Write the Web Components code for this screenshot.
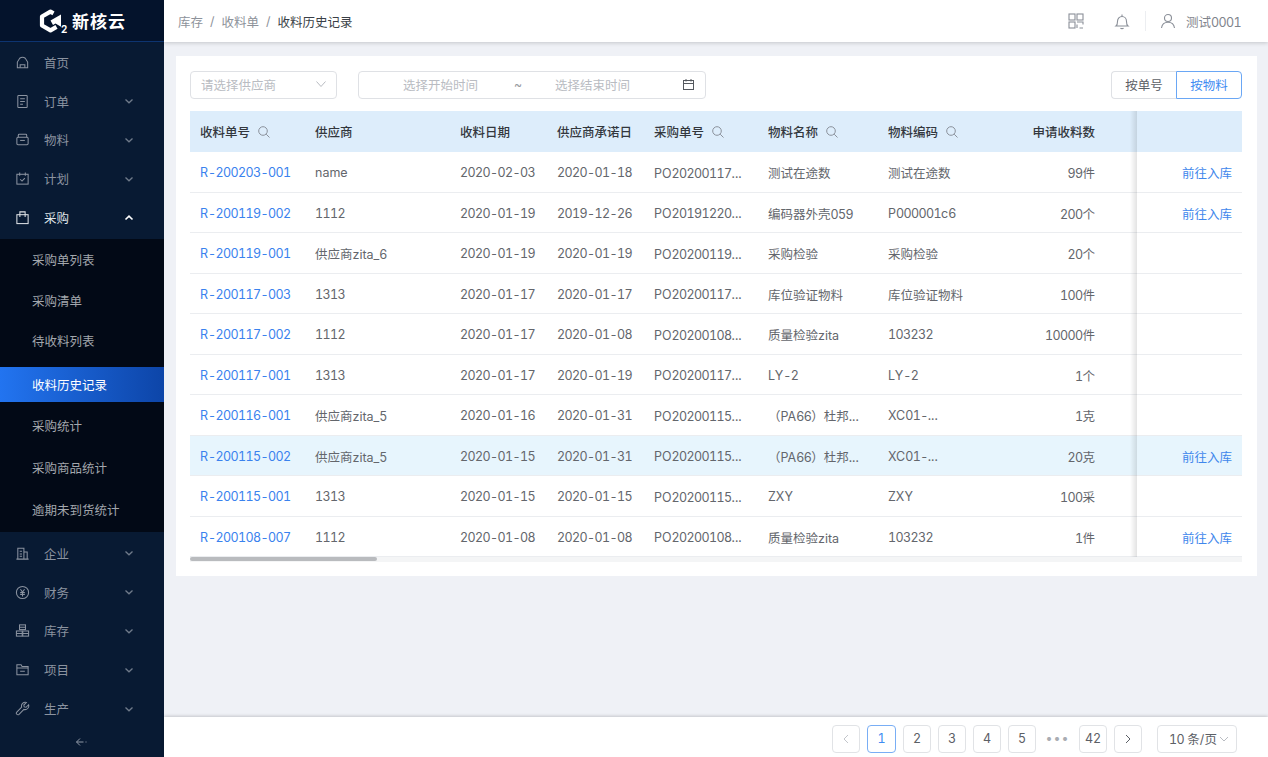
<!DOCTYPE html>
<html lang="zh-CN">
<head>
<meta charset="utf-8">
<title>收料历史记录</title>
<style>
  html, body { margin: 0; height: 100%; }
  body { font-family: Inter, "Noto Sans CJK SC", sans-serif; font-size: 12.5px; font-variant-numeric: tabular-nums; overflow: hidden; }
</style>
</head>
<body>
<app-shell>
  <side-nav slot="side"></side-nav>
  <top-bar slot="top"></top-bar>
  <receipt-table></receipt-table>
  <page-bar slot="bottom"></page-bar>
</app-shell>

<script>
const ICONS = {
  home: '<path d="M2.5 13.5V7.5L5 3.5c1.500-1 4.500-1 6 0l2.500 4v6z"/><path d="M5.500 13.500v-3h5v3"/>',
  order: '<rect x="3" y="1.500" width="10" height="13" rx=".8"/><path d="M5.500 5h5M5.500 8h5M5.500 11h3"/>',
  box: '<path d="M3.500 5.500V3.500c0-.6.4-1 1-1h7c.6 0 1 .4 1 1v2"/><rect x="2" y="5.500" width="12" height="8" rx="1.200"/><path d="M5.500 9h5"/>',
  plan: '<rect x="2" y="3.500" width="12" height="10.500"/><path d="M5 1.500v3.500M11 1.500v3.500M5.500 8.800 7.500 10.800 10.500 7.500"/>',
  bag: '<rect x="2" y="5" width="12" height="9.500"/><path d="M5.200 7.500V2h5.600v5.500"/>',
  corp: '<path d="M3 14V2.500h6.500V14M1.500 14h13M9.500 6.500H13V14M5 5.500h2.500M5 8.500h2.500M5 11h2.500"/>',
  money: '<circle cx="8" cy="8" r="6.500"/><path d="M5.800 4.600 8 7.500l2.200-2.900M5.500 8h5M5.500 10h5M8 7.500V12.200"/>',
  stock: '<rect x="4.800" y="2" width="6.400" height="5"/><rect x="1.500" y="8.500" width="6.200" height="5.500"/><rect x="8.300" y="8.500" width="6.200" height="5.500"/><path d="M1.500 11.200h6.200M8.300 11.200h6.200M4.800 4.500h6.400"/>',
  folder: '<path d="M2 3h4.500l1 1.800H14V13.500H2z"/><path d="M2 6.500h12M5.500 9.800h5"/>',
  wrench: '<path d="M14.500 4 11.800 6.700 9.800 6.300 9.400 4.300 12.100 1.600a4 4 0 0 0-5 5L1.900 11.800a1.700 1.700 0 0 0 2.400 2.400l5.200-5.200a4 4 0 0 0 5-5z"/>'
};

const CHEVRON_DOWN = '<svg width="10" height="10" viewBox="0 0 10 10" fill="none" stroke="currentColor" stroke-width="1.300"><path d="M1.500 3.500 5 6.800 8.500 3.500"/></svg>';
const CHEVRON_UP = '<svg width="10" height="10" viewBox="0 0 10 10" fill="none" stroke="currentColor" stroke-width="1.600"><path d="M1.500 6.500 5 3.200 8.500 6.500"/></svg>';
const SEARCH = '<svg width="14" height="14" viewBox="0 0 14 14" fill="none" stroke="#8b929c" stroke-width="1"><circle cx="6" cy="6" r="4.300"/><path d="M9.200 9.200 12.500 12.500"/></svg>';

// digits are tabular but a bit too wide at this size, so runs of them get tightened
const tight = text => text.replace(/[\d-]+/g, '<span class="n">$&</span>');

class NavItem extends HTMLElement {
  constructor() {
    super();
    this.attachShadow({mode: 'open'});
  }
  connectedCallback() {
    const icon = ICONS[this.getAttribute('icon')];
    const open = this.hasAttribute('open');
    const arrow = this.hasAttribute('leaf') ? '' : (open ? CHEVRON_UP : CHEVRON_DOWN);
    this.shadowRoot.innerHTML = `<style>
        :host { display: flex; align-items: center; height: 38.8px; padding: 0 30px 0 15px; color: #8b93a0; font-size: 12.5px; }
        :host([open]) { color: #dfe2e6; }
        svg.ico { width: 15px; height: 15px; margin-right: 14px; flex: none; }
        span { flex: 1; }
        .arrow { display: flex; color: #6f7a8a; }
        :host([open]) .arrow { color: #fff; }
      </style>
      <svg class="ico" viewBox="0 0 16 16" fill="none" stroke="currentColor" stroke-width="1.100">${icon}</svg>
      <span><slot></slot></span>
      <div class="arrow">${arrow}</div>`;
  }
}
customElements.define('nav-item', NavItem);

class SubItem extends HTMLElement {
  constructor() {
    super();
    this.attachShadow({mode: 'open'}).innerHTML = `<style>
        :host { display: flex; align-items: center; height: 42px; padding-left: 32px; color: #a3a7ad; font-size: 12.5px; }
        :host([active]) { color: #fff; background: linear-gradient(90deg, #2274f0, #0d45a8); height: 35px; margin: 6px 0 3px; }
      </style><slot></slot>`;
  }
}
customElements.define('sub-item', SubItem);

class SideNav extends HTMLElement {
  constructor() {
    super();
    this.attachShadow({mode: 'open'}).innerHTML = `<style>
        :host { display: flex; flex-direction: column; width: 164px; height: 757px; background: #081a33; }
        .logo { height: 41px; flex: none; background: #04132c; border-bottom: 1px solid #0d3470; display: flex; align-items: center; padding-left: 39px; color: #fff; }
        .mark { position: relative; width: 33px; height: 24px; flex: none; }
        .mark svg { display: block; }
        .mark span { position: absolute; left: 22px; top: 14px; font: 700 10px/12px Inter, sans-serif; }
        .logo b { font: 700 17px "Noto Sans CJK SC", sans-serif; letter-spacing: 1px; }
        .top { padding: 1px 0 2.5px; }
        .sub { background: #020916; height: 292.5px; }
        .sub sub-item:nth-child(-n+3) { height: 40.5px; }
        .low { padding-top: 2px; }
        .foot { flex: 1; display: flex; justify-content: center; align-items: center; color: #8f98a6; }
      </style>
      <div class="logo">
        <div class="mark">
          <svg width="24" height="24" viewBox="0 0 24 24" fill="none" stroke="#fff" stroke-width="4.200" stroke-linejoin="round"><path d="M14.500 4.300 11.500 2.600 3 7.500v9l8.500 4.900 6-3.500"/><path fill="#fff" stroke="none" d="M11.500 11.500 22 5.500v12.300l-5.500-3.200-2.500 1.400z"/></svg>
          <span>2</span>
        </div>
        <b>新核云</b>
      </div>
      <div class="top">
        <nav-item icon="home" leaf>首页</nav-item>
        <nav-item icon="order">订单</nav-item>
        <nav-item icon="box">物料</nav-item>
        <nav-item icon="plan">计划</nav-item>
        <nav-item icon="bag" open>采购</nav-item>
      </div>
      <div class="sub">
        <sub-item>采购单列表</sub-item>
        <sub-item>采购清单</sub-item>
        <sub-item>待收料列表</sub-item>
        <sub-item active>收料历史记录</sub-item>
        <sub-item>采购统计</sub-item>
        <sub-item>采购商品统计</sub-item>
        <sub-item>逾期未到货统计</sub-item>
      </div>
      <div class="low">
        <nav-item icon="corp">企业</nav-item>
        <nav-item icon="money">财务</nav-item>
        <nav-item icon="stock">库存</nav-item>
        <nav-item icon="folder">项目</nav-item>
        <nav-item icon="wrench">生产</nav-item>
      </div>
      <div class="foot"><svg width="14" height="10" viewBox="0 0 14 10" fill="none" stroke="currentColor" stroke-width="1"><path d="M5 1.500 1.500 5 5 8.500M1.500 5h7M10.500 5h1"/></svg></div>`;
  }
}
customElements.define('side-nav', SideNav);

class TopBar extends HTMLElement {
  constructor() {
    super();
    this.attachShadow({mode: 'open'}).innerHTML = `<style>
        :host { display: flex; align-items: center; height: 42px; background: #fff; box-shadow: 0 1px 4px rgba(0,0,0,.18); padding: 0 27px 0 14px; color: #8d929a; font-size: 12.5px; position: relative; z-index: 2; }
        .crumbs { flex: 1; display: flex; gap: 7px; }
        .cur { color: #3a3f47; }
        .s { padding-top: 2px; }
        svg { display: block; }
        .right { display: flex; align-items: center; color: #8a8f98; }
        .sep { width: 1px; height: 20px; background: #eceef1; margin: 0 14px 0 15px; }
        .user { margin-left: 10px; color: #7f848c; }
        .n { letter-spacing: -.6px; }
      </style>
      <div class="crumbs"><span>库存</span><span class="s">/</span><span>收料单</span><span class="s">/</span><span class="cur">收料历史记录</span></div>
      <div class="right">
        <svg width="16" height="16" viewBox="0 0 16 16" fill="none" stroke="currentColor" stroke-width="1.100" style="margin-right:30px"><rect x="1" y="1" width="6" height="6"/><rect x="9" y="1" width="6" height="6"/><rect x="1" y="9" width="6" height="6"/><path d="M9 9h6v2.500M9 11.500V15M11.500 15H15"/></svg>
        <svg width="16" height="17" viewBox="0 0 16 17" fill="none" stroke="currentColor" stroke-width="1.100"><path d="M2 13c1.300-1 1.500-2 1.500-4.500C3.500 5.500 5.500 3.500 8 3.500s4.500 2 4.500 5c0 2.500.2 3.500 1.500 4.500z"/><path d="M8 1.500v2M6.500 15c.5.800 2.500.8 3 0"/></svg>
        <div class="sep"></div>
        <svg width="16" height="16" viewBox="0 0 16 16" fill="none" stroke="currentColor" stroke-width="1.100"><circle cx="8" cy="5" r="3.500"/><path d="M1.500 15c.5-3.500 3-5.800 6.500-5.800s6 2.300 6.500 5.800"/></svg>
        <span class="user">测试<span class="n">0001</span></span>
      </div>`;
  }
}
customElements.define('top-bar', TopBar);

const ROWS = [
  ['R-200203-001','name','2020-02-03','2020-01-18','PO20200117...','测试在途数','测试在途数','99件',1],
  ['R-200119-002','1112','2020-01-19','2019-12-26','PO20191220...','编码器外壳059','P000001c6','200个',1],
  ['R-200119-001','供应商zita_6','2020-01-19','2020-01-19','PO20200119...','采购检验','采购检验','20个',0],
  ['R-200117-003','1313','2020-01-17','2020-01-17','PO20200117...','库位验证物料','库位验证物料','100件',0],
  ['R-200117-002','1112','2020-01-17','2020-01-08','PO20200108...','质量检验zita','103232','10000件',0],
  ['R-200117-001','1313','2020-01-17','2020-01-19','PO20200117...','LY-2','LY-2','1个',0],
  ['R-200116-001','供应商zita_5','2020-01-16','2020-01-31','PO20200115...','（PA66）杜邦...','XC01-...','1克',0],
  ['R-200115-002','供应商zita_5','2020-01-15','2020-01-31','PO20200115...','（PA66）杜邦...','XC01-...','20克',1,1],
  ['R-200115-001','1313','2020-01-15','2020-01-15','PO20200115...','ZXY','ZXY','100采',0],
  ['R-200108-007','1112','2020-01-08','2020-01-08','PO20200108...','质量检验zita','103232','1件',1]
];

class ReceiptTable extends HTMLElement {
  constructor() {
    super();
    const head = ['收料单号','供应商','收料日期','供应商承诺日','采购单号','物料名称','物料编码','申请收料数'];
    const searchable = [0, 4, 5, 6];
    const headHtml = head.map((h, i) => `<div class="th ${i === 7 ? 'num' : ''}">${h}${searchable.includes(i) ? SEARCH : ''}</div>`).join('') + '<div class="th fix"></div>';
    const rowHtml = ROWS.map(r => {
      const cells = r.slice(0, 8).map((c, i) => `<div class="td ${i === 0 ? 'link' : ''} ${i === 4 ? 'po' : ''} ${i === 7 ? 'num' : ''}"><div>${tight(c)}</div></div>`).join('');
      return `<div class="row ${r[9] ? 'on' : ''}">${cells}<div class="td fix go">${r[8] ? '前往入库' : ''}</div></div>`;
    }).join('');
    this.attachShadow({mode: 'open'}).innerHTML = `<style>
        :host { display: block; background: #fff; padding: 15px 15px 14px 14px; margin: 14px 11px 0 12px; color: #63666c; font-size: 12.5px; }
        .bar { display: flex; align-items: center; height: 28px; gap: 21px; margin-bottom: 12px; }
        .box { box-sizing: border-box; height: 28px; border: 1px solid #dfe1e5; border-radius: 4px; display: flex; align-items: center; color: #b9bcc2; }
        .sel { width: 147px; padding: 0 9px 2px 10px; justify-content: space-between; }
        .range { width: 348px; padding: 0 10px 2px 44px; }
        .range span:nth-child(1) { width: 111px; flex: none; }
        .range span:nth-child(2) { width: 41px; flex: none; color: #9a9da3; }
        .range span:nth-child(3) { flex: 1; }
        .range svg { color: #55595f; }
        .toggle { margin-left: auto; display: flex; }
        .toggle div { box-sizing: border-box; height: 28px; width: 65px; padding-bottom: 2px; display: flex; align-items: center; justify-content: center; border: 1px solid #dfe1e5; border-right: 0; border-radius: 4px 0 0 4px; color: #5c6066; }
        .toggle div.on { width: 66px; border: 1px solid #6aa7f5; border-radius: 0 4px 4px 0; color: #3f8cf2; }
        .grid { position: relative; }
        .shade { position: absolute; top: 0; bottom: 0; right: 105px; width: 7px; background: linear-gradient(90deg, rgba(0,0,0,0), rgba(0,0,0,.11)); }
        .row, .head { display: grid; grid-template-columns: 115px 145px 97px 97px 114px 120px 100px 127px 32px 105px; }
        .head { height: 41px; background: #ddedfb; color: #33373d; font-weight: 500; }
        .row { height: 40.5px; box-sizing: border-box; border-bottom: 1px solid #ebedf0; }
        .row.on { background: #e7f5fd; }
        .th, .td { display: flex; align-items: center; padding: 0 10px; white-space: nowrap; }
        .td { padding-top: 2px; }
        .th svg { margin-left: 7px; }
        .num { justify-content: flex-end; }
        .n { letter-spacing: -.6px; }
        .td.po { padding-top: 3px; }
        .link { color: #3a82ee; }
        .fix { grid-column: 10; justify-content: flex-end; }
        .go { color: #3f87ec; }
        .bar2 { height: 5px; background: #f4f5f6; }
        .bar2 i { display: block; width: 187px; height: 4px; border-radius: 2px; background: #b9bbbe; }
      </style>
      <div class="bar">
        <div class="box sel"><span>请选择供应商</span><svg width="12" height="12" viewBox="0 0 12 12" fill="none" stroke="#b9bcc2" stroke-width="1"><path d="M1.500 3.500 6 8.500l4.500-5"/></svg></div>
        <div class="box range"><span>选择开始时间</span><span>~</span><span>选择结束时间</span><svg width="13" height="13" viewBox="0 0 13 13" fill="none" stroke="currentColor" stroke-width="1"><rect x="1.500" y="2.500" width="10" height="9"/><path d="M1.500 5.500h10M4 1v2.500M9 1v2.500"/></svg></div>
        <div class="toggle"><div>按单号</div><div class="on">按物料</div></div>
      </div>
      <div class="grid">
        <div class="head">${headHtml}</div>
        ${rowHtml}
        <div class="shade"></div>
      </div>
      <div class="bar2"><i></i></div>`;
  }
}
customElements.define('receipt-table', ReceiptTable);

class PageBar extends HTMLElement {
  constructor() {
    super();
    const pages = ['1','2','3','4','5'];
    this.attachShadow({mode: 'open'}).innerHTML = `<style>
        :host { display: flex; align-items: center; justify-content: flex-end; gap: 7px; height: 40px; box-sizing: border-box; padding: 3px 31px 0 0; background: #fff; box-shadow: 0 -1px 3px rgba(0,0,0,.18); color: #5c6066; font-size: 12.5px; position: relative; }
        .p { box-sizing: border-box; width: 28px; height: 28px; border: 1px solid #e1e3e6; border-radius: 4px; display: flex; align-items: center; justify-content: center; }
        .p.on { width: 29px; border-color: #79aef5; color: #3f8cf2; }
        .p.off { color: #c3c6cb; }
        .dots { width: 29px; text-align: center; color: #a9acb2; letter-spacing: 1px; }
        .size { box-sizing: border-box; width: 80px; height: 28px; margin-left: 8px; border: 1px solid #e1e3e6; border-radius: 4px; display: flex; align-items: center; padding-left: 11px; gap: 2px; }
        .n { letter-spacing: -.6px; }
      </style>
      <div class="p off"><svg width="10" height="10" viewBox="0 0 10 10" fill="none" stroke="currentColor"><path d="M7 1 3 5l4 4"/></svg></div>
      ${pages.map((p, i) => `<div class="p ${i === 0 ? 'on' : ''}">${p}</div>`).join('')}
      <div class="dots">•••</div>
      <div class="p">42</div>
      <div class="p"><svg width="10" height="10" viewBox="0 0 10 10" fill="none" stroke="currentColor"><path d="M3 1l4 4-4 4"/></svg></div>
      <div class="size"><span><span class="n">10</span> 条/页</span><svg width="10" height="10" viewBox="0 0 10 10" fill="none" stroke="#b9bcc2"><path d="M1 3l4 4 4-4"/></svg></div>`;
  }
}
customElements.define('page-bar', PageBar);

class AppShell extends HTMLElement {
  constructor() {
    super();
    this.attachShadow({mode: 'open'}).innerHTML = `<style>
        :host { display: flex; width: 1268px; height: 757px; background: #eff1f6; overflow: hidden; }
        .main { flex: 1; min-width: 0; display: flex; flex-direction: column; }
        .body { flex: 1; min-height: 0; display: flow-root; }
      </style>
      <slot name="side"></slot>
      <div class="main">
        <slot name="top"></slot>
        <div class="body"><slot></slot></div>
        <slot name="bottom"></slot>
      </div>`;
  }
}
customElements.define('app-shell', AppShell);
</script>
</body>
</html>
